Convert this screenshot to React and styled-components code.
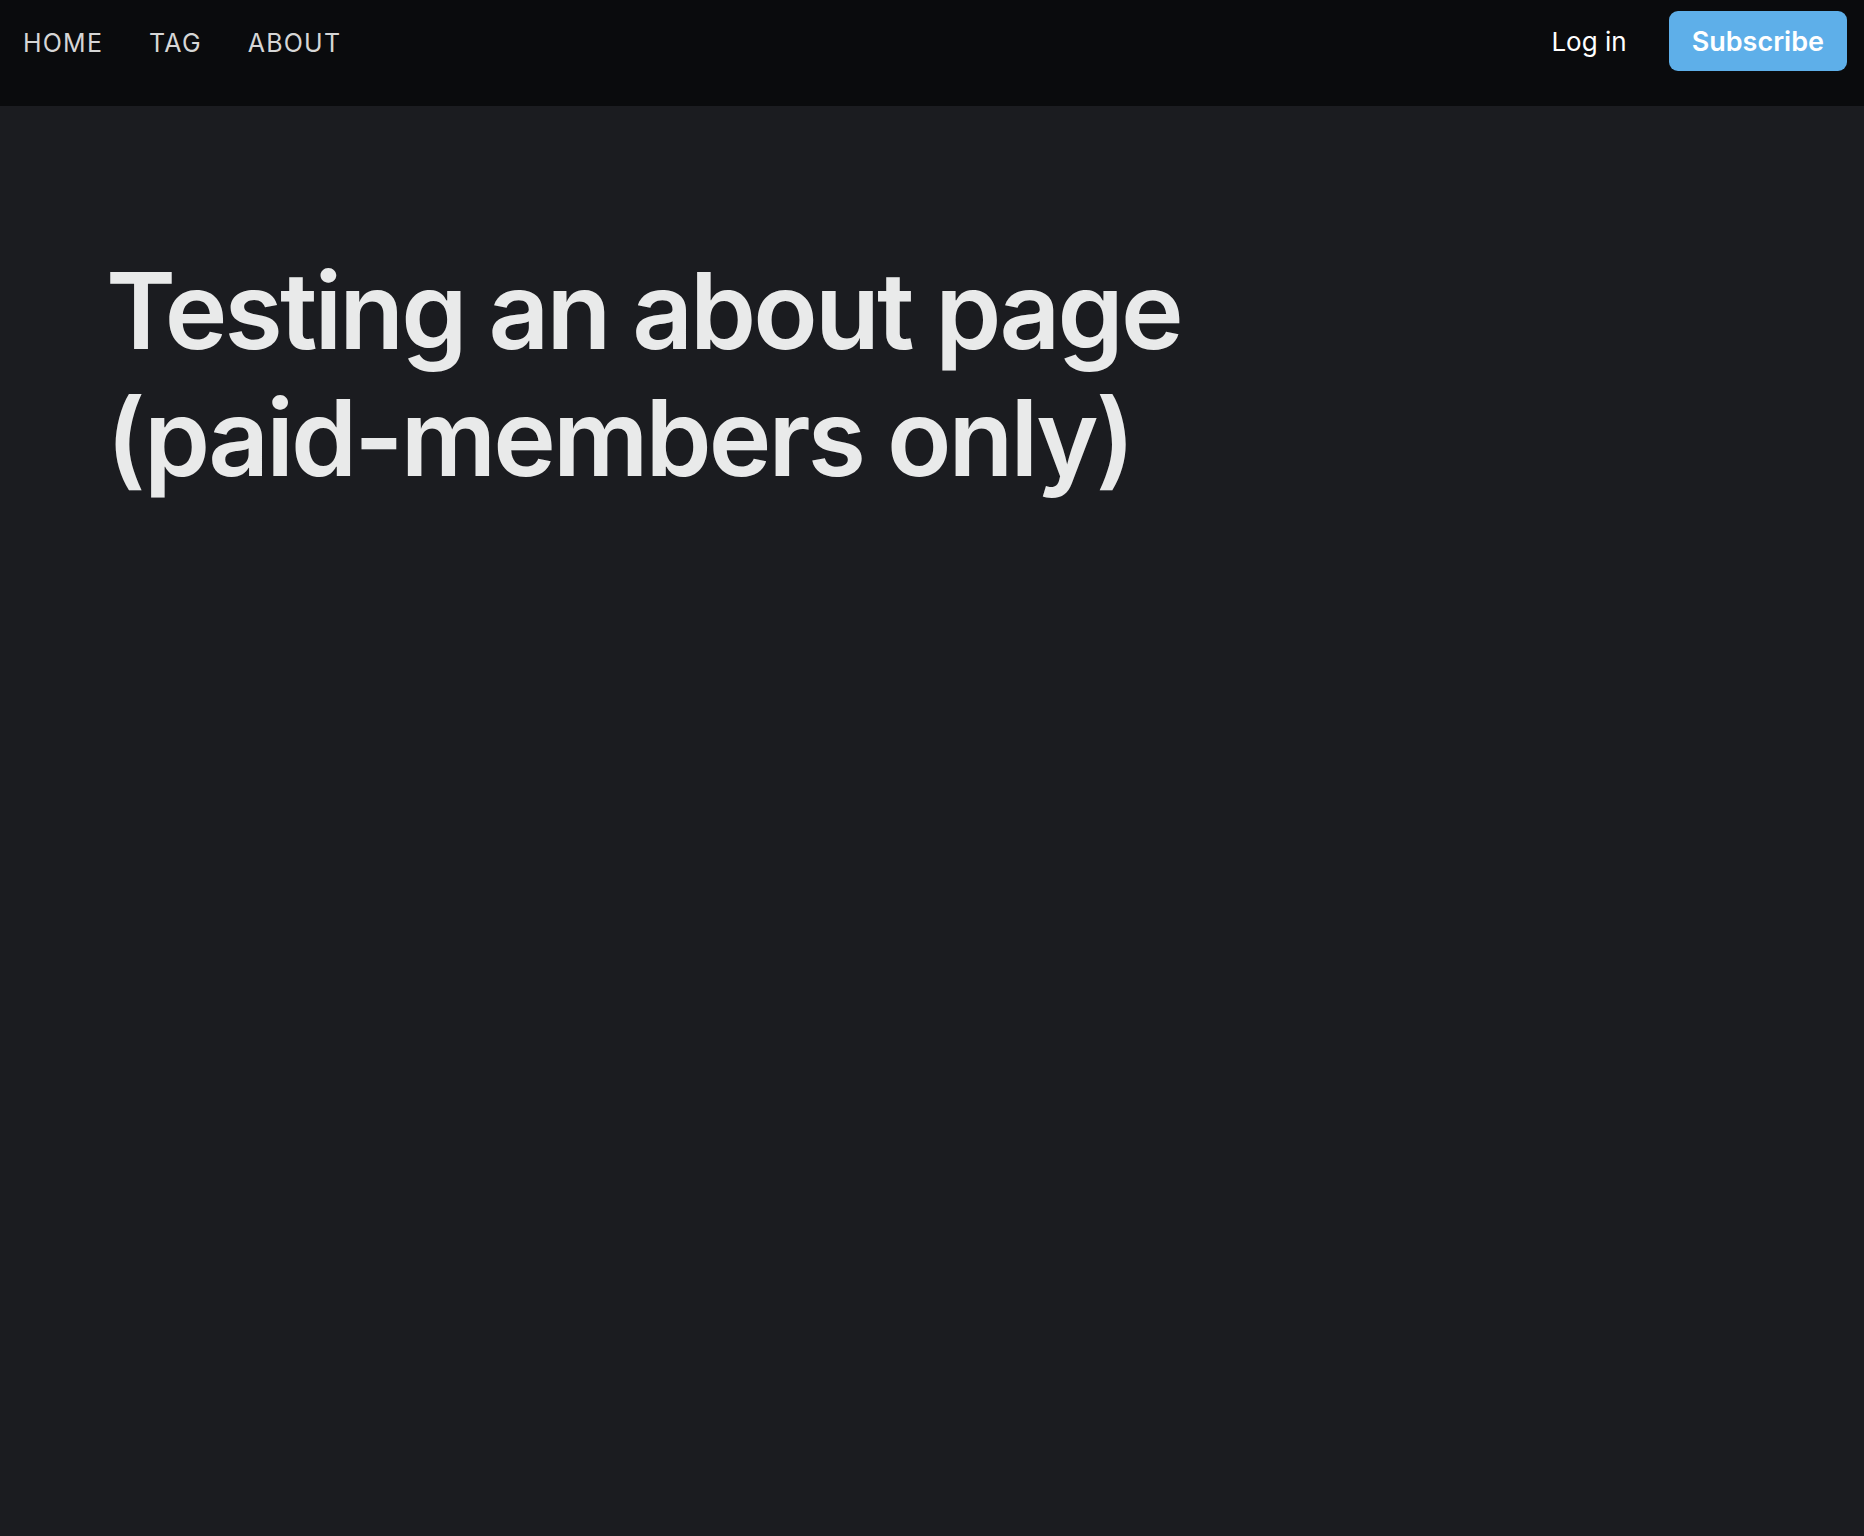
import styled, { createGlobalStyle } from "styled-components";

const Global = createGlobalStyle`
  html, body {
    margin: 0;
    padding: 0;
    background: #1b1c20;
    font-family: Inter, "Noto Sans", sans-serif;
  }
`;

const Page = styled.div`
  min-height: 1536px;
  background: #1b1c20;
`;

const Header = styled.header`
  height: 106px;
  box-sizing: border-box;
  padding: 11px 17px 35px 23px;
  background: #0a0b0d;
  display: flex;
  align-items: center;
  justify-content: space-between;
`;

const Nav = styled.nav`
  display: flex;
  gap: 46px;
  padding-top: 4px;
`;

const NavLink = styled.a`
  font-size: 25px;
  letter-spacing: 1.2px;
  color: #d6d6d6;
  text-decoration: none;
  text-transform: uppercase;
`;

const Actions = styled.div`
  display: flex;
  align-items: center;
  gap: 42px;
`;

const Login = styled.a`
  font-size: 26px;
  color: #ffffff;
  text-decoration: none;
`;

const Subscribe = styled.button`
  height: 60px;
  padding: 0 23px;
  border: none;
  border-radius: 9px;
  background: #5eafe9;
  color: #ffffff;
  font-family: inherit;
  font-size: 27px;
  font-weight: 600;
`;

const Main = styled.main`
  padding: 141px 106px 0;
`;

const Title = styled.h1`
  margin: 0;
  font-size: 106px;
  line-height: 1.2;
  font-weight: 600;
  letter-spacing: -2.9px;
  color: #e9eaea;
`;

export default function App() {
  return (
    <Page>
      <Global />
      <Header>
        <Nav>
          <NavLink href="#">Home</NavLink>
          <NavLink href="#">Tag</NavLink>
          <NavLink href="#">About</NavLink>
        </Nav>
        <Actions>
          <Login href="#">Log in</Login>
          <Subscribe>Subscribe</Subscribe>
        </Actions>
      </Header>
      <Main>
        <Title>
          Testing an about page
          <br />
          (paid-members only)
        </Title>
      </Main>
    </Page>
  );
}
